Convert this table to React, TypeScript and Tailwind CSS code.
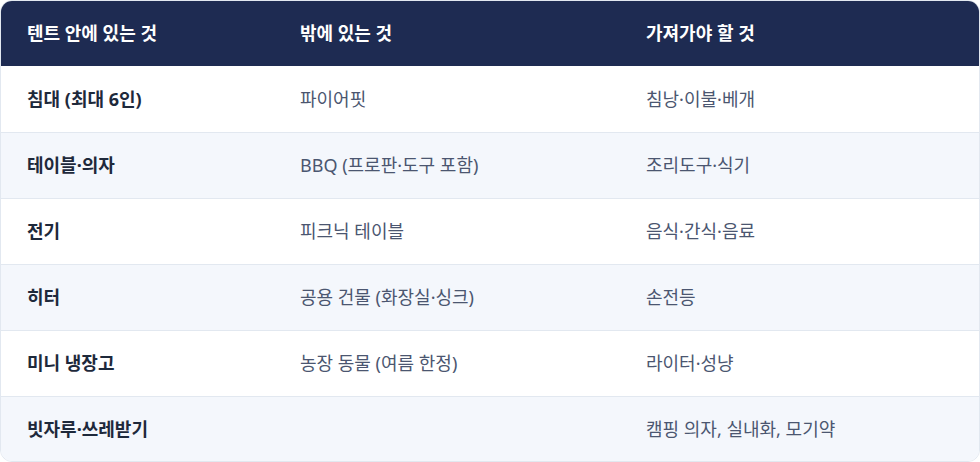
const rows: [string, string, string][] = [
  ["침대 (최대 6인)", "파이어핏", "침낭·이불·베개"],
  ["테이블·의자", "BBQ (프로판·도구 포함)", "조리도구·식기"],
  ["전기", "피크닉 테이블", "음식·간식·음료"],
  ["히터", "공용 건물 (화장실·싱크)", "손전등"],
  ["미니 냉장고", "농장 동물 (여름 한정)", "라이터·성냥"],
  ["빗자루·쓰레받기", "", "캠핑 의자, 실내화, 모기약"],
];

const cols = "grid grid-cols-[273px_346px_1fr]";

export default function App() {
  return (
    <div
      className="w-[980px] h-[462px] bg-white"
      style={{ fontFamily: '"Noto Sans", "Noto Sans CJK KR", sans-serif' }}
    >
      <div className="h-full overflow-hidden rounded-xl border border-[#e2e8f0]">
        <div className={`${cols} h-[65px] items-center bg-[#1e2b52] text-[18px] font-semibold text-white`}>
          <div className="pl-[26px]">텐트 안에 있는 것</div>
          <div className="pl-[26px]">밖에 있는 것</div>
          <div className="pl-[26px]">가져가야 할 것</div>
        </div>
        {rows.map((r, i) => (
          <div
            key={i}
            className={`${cols} h-[66px] items-center text-[18px] ${
              i % 2 === 1 ? "bg-[#f4f7fc]" : "bg-white"
            } ${i > 0 ? "border-t border-[#e2e8f0]" : ""}`}
          >
            <div className="pl-[26px] font-bold text-[#1e293b]">{r[0]}</div>
            <div className="pl-[26px] text-[#4b5670]">{r[1]}</div>
            <div className="pl-[26px] text-[#4b5670]">{r[2]}</div>
          </div>
        ))}
      </div>
    </div>
  );
}
